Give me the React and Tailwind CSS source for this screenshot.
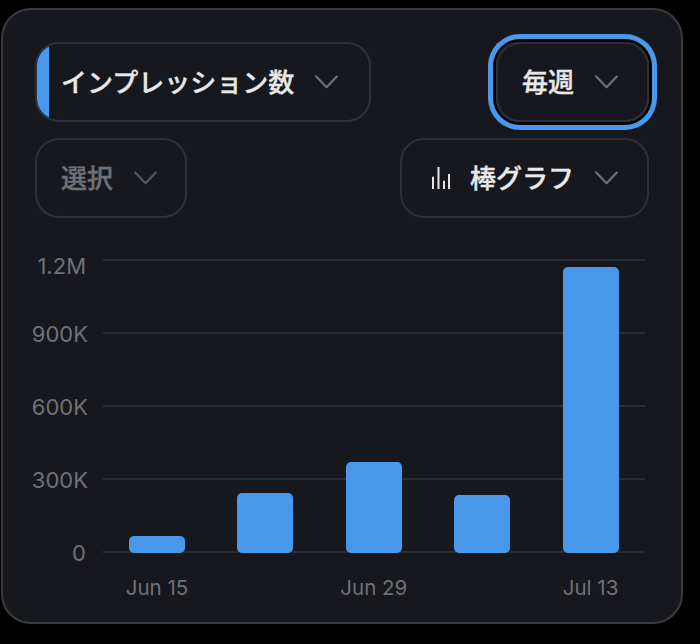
import React from "react";

const Chevron = ({ className }) => (
  <svg width="23" height="14" viewBox="0 0 23 14" fill="none" className={`shrink-0 ${className}`}>
    <path d="M1.2 1.5L11.5 12.2L21.8 1.5" stroke="currentColor" strokeWidth="2.2" strokeLinecap="round" strokeLinejoin="round" />
  </svg>
);

const BarsIcon = () => (
  <svg width="20" height="22" viewBox="0 0 20 22" fill="none" className="shrink-0">
    <path d="M1 9.7V22M6.5 0V22M12 13.7V22M17 7V22" stroke="#e5e5e6" strokeWidth="2" />
  </svg>
);

const bars = [
  { h: 17, label: "Jun 15" },
  { h: 60, label: "" },
  { h: 91, label: "Jun 29" },
  { h: 58, label: "" },
  { h: 286, label: "Jul 13" },
];

const yLabels = [
  { t: "1.2M", m: "mt-[-5px] mr-[2px]" },
  { t: "900K", m: "mt-[44px]" },
  { t: "600K", m: "mt-[49px]" },
  { t: "300K", m: "mt-[49px]" },
  { t: "0", m: "mt-[49px] mr-[2px]" },
];

export default function App() {
  return (
    <div className="h-[644px] w-[700px] bg-black pt-2 pl-[1px] font-['Inter','Noto_Sans_CJK_JP',sans-serif]">
      <div className="flex h-[616px] w-[682px] flex-col rounded-[30px] border-2 border-[#3a3b3f] bg-[#17181d] px-[32px] pt-[32px]">
        <div className="flex items-center justify-between">
          <button className="flex h-20 w-[336px] items-center overflow-hidden rounded-3xl border-2 border-[#2f3035] text-[26px] font-medium text-[#e8e8e9] [-webkit-text-stroke:0.35px]">
            <span className="h-full w-3 shrink-0 bg-[#4a98ec]" />
            <span className="ml-3 whitespace-nowrap">インプレッション数</span>
            <Chevron className="ml-[21px] text-[#707176]" />
          </button>
          <button className="flex h-20 items-center gap-[21px] rounded-3xl border-2 border-[#2f3035] pl-6 pr-[29px] text-[26px] font-medium text-[#e8e8e9] shadow-[0_0_0_3px_#000,0_0_0_8px_#4a98ec] [-webkit-text-stroke:0.35px]">
            <span>毎週</span>
            <Chevron className="text-[#707176]" />
          </button>
        </div>
        <div className="mt-4 flex items-center justify-between">
          <button className="flex h-20 items-center gap-[21px] rounded-3xl border-2 border-[#2f3035] pl-6 pr-[28px] text-[26px] font-medium text-[#707176] [-webkit-text-stroke:0.35px]">
            <span>選択</span>
            <Chevron className="text-[#56575b]" />
          </button>
          <button className="flex h-20 items-center rounded-3xl border-2 border-[#2f3035] pl-[30px] pr-[29px] text-[26px] font-medium text-[#e8e8e9] [-webkit-text-stroke:0.35px]">
            <BarsIcon />
            <span className="ml-[18px]">棒グラフ</span>
            <Chevron className="ml-[21px] text-[#707176]" />
          </button>
        </div>
        <div className="mt-[41px] flex">
          <div className="-ml-[6px] flex w-[59px] flex-col text-right text-[22px] text-[#707176]">
            {yLabels.map((l) => (
              <span key={l.t} className={`h-6 leading-6 ${l.m}`}>{l.t}</span>
            ))}
          </div>
          <div className="ml-[15px] w-[542px]">
            <div className="relative h-[294px]">
              <div className="absolute inset-0 flex flex-col justify-between">
                {yLabels.map((l) => (
                  <div key={l.t} className="h-[2px] bg-[#2c2d32]" />
                ))}
              </div>
              <div className="absolute inset-x-0 bottom-0 flex items-end gap-[52.4px] pl-[26px]">
                {bars.map((b, i) => (
                  <div key={i} className="w-[56px] shrink-0 rounded-[5px] bg-[#4a98ec]" style={{ height: b.h }} />
                ))}
              </div>
            </div>
            <div className="mt-[23px] flex gap-[52.4px] pl-[26px] text-[20.5px] leading-6 text-[#707176]">
              {bars.map((b, i) => (
                <div key={i} className="flex w-[56px] shrink-0 justify-center whitespace-nowrap">{b.label}</div>
              ))}
            </div>
          </div>
        </div>
      </div>
    </div>
  );
}
